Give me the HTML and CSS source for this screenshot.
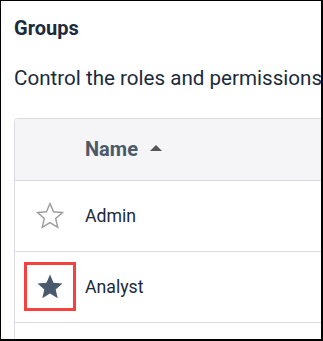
FILE: index.html
```html
<!DOCTYPE html>
<html lang="en">
<head>
  <meta charset="UTF-8" />
  <title>Groups</title>
  <meta name="viewport" content="width=device-width, initial-scale=1.0" />
  <link rel="stylesheet" href="styles.css">
</head>
<body>

  <div class="frame">
    <h1 class="title">Groups</h1>
    <p class="intro">Control the roles and permissions</p>

    <div class="card">
      <table class="groups">
        <thead>
          <tr>
            <th class="col-fav"></th>
            <th class="col-name">
              Name
              <svg class="sort" viewBox="0 0 12 6" width="12" height="6">
                <path d="M0 6L6 0l6 6z" fill="#555"/>
              </svg>
            </th>
          </tr>
        </thead>
        <tbody>
          <tr>
            <td class="col-fav">
              <svg class="star" viewBox="0 0 24 24" width="30" height="30">
                <path d="M12 17.27L18.18 21l-1.64-7.03L22 9.24l-7.19-.61L12 2 9.19 8.63 2 9.24l5.46 4.73L5.82 21z" fill="none" stroke="#9b9b9b" stroke-width="1.1"/>
              </svg>
            </td>
            <td class="col-name">Admin</td>
          </tr>
          <tr>
            <td class="col-fav">
              <span class="highlight">
                <svg class="star" viewBox="0 0 24 24" width="30" height="30">
                  <path d="M12 17.27L18.18 21l-1.64-7.03L22 9.24l-7.19-.61L12 2 9.19 8.63 2 9.24l5.46 4.73L5.82 21z" fill="#4a5a6d"/>
                </svg>
              </span>
            </td>
            <td class="col-name">Analyst</td>
          </tr>
          <tr>
            <td class="col-fav"></td>
            <td class="col-name"></td>
          </tr>
        </tbody>
      </table>
    </div>
  </div>

</body>
</html>
```

FILE: styles.css
```css
/* Reset & base */
* {
  box-sizing: border-box;
}
body, html {
  margin: 0;
  padding: 0;
  background: #fff;
  font-family: Roboto, "Noto Sans", sans-serif;
  color: #1b2a3b;
}

/* Black outline round the shot */
.frame {
  height: 341px;
  width: 323px;
  border: 1px solid #000;
  border-right-width: 2px;
  border-bottom-width: 2px;
  overflow: hidden;
  padding: 0 0 0 13px;
}

.title {
  margin: 14px 0 0;
  font-size: 20px;
  line-height: 26px;
  font-weight: 700;
  color: #1c2b3c;
}

.intro {
  margin: 24px 0 0;
  font-size: 20.6px;
  line-height: 26px;
  white-space: nowrap;
}

/* Table card */
.card {
  margin-top: 27px;
  width: 420px;
  border: 1px solid #dcdae6;
  border-radius: 4px 0 0 0;
  overflow: hidden;
}

.groups {
  width: 100%;
  border-collapse: collapse;
}

.groups th {
  background: #f5f4f6;
  height: 61px;
  text-align: left;
  font-size: 20px;
  font-weight: 700;
  color: #4b5a69;
  border-bottom: 1px solid #dcdae6;
}

.groups td {
  height: 71px;
  font-size: 17.7px;
  color: #1b2a3b;
  border-bottom: 1px solid #dcdae6;
}

.col-fav {
  width: 70px;
  padding: 0;
  text-align: center;
}

.col-name {
  padding: 0;
}

.sort {
  margin-left: 7px;
  vertical-align: 5px;
}

.star {
  display: block;
  margin: 0 auto;
}

/* Red marker round the favourite star */
.highlight {
  display: inline-flex;
  align-items: center;
  justify-content: center;
  width: 52px;
  height: 49px;
  border: 3px solid #f4433f;
  vertical-align: middle;
}
```
